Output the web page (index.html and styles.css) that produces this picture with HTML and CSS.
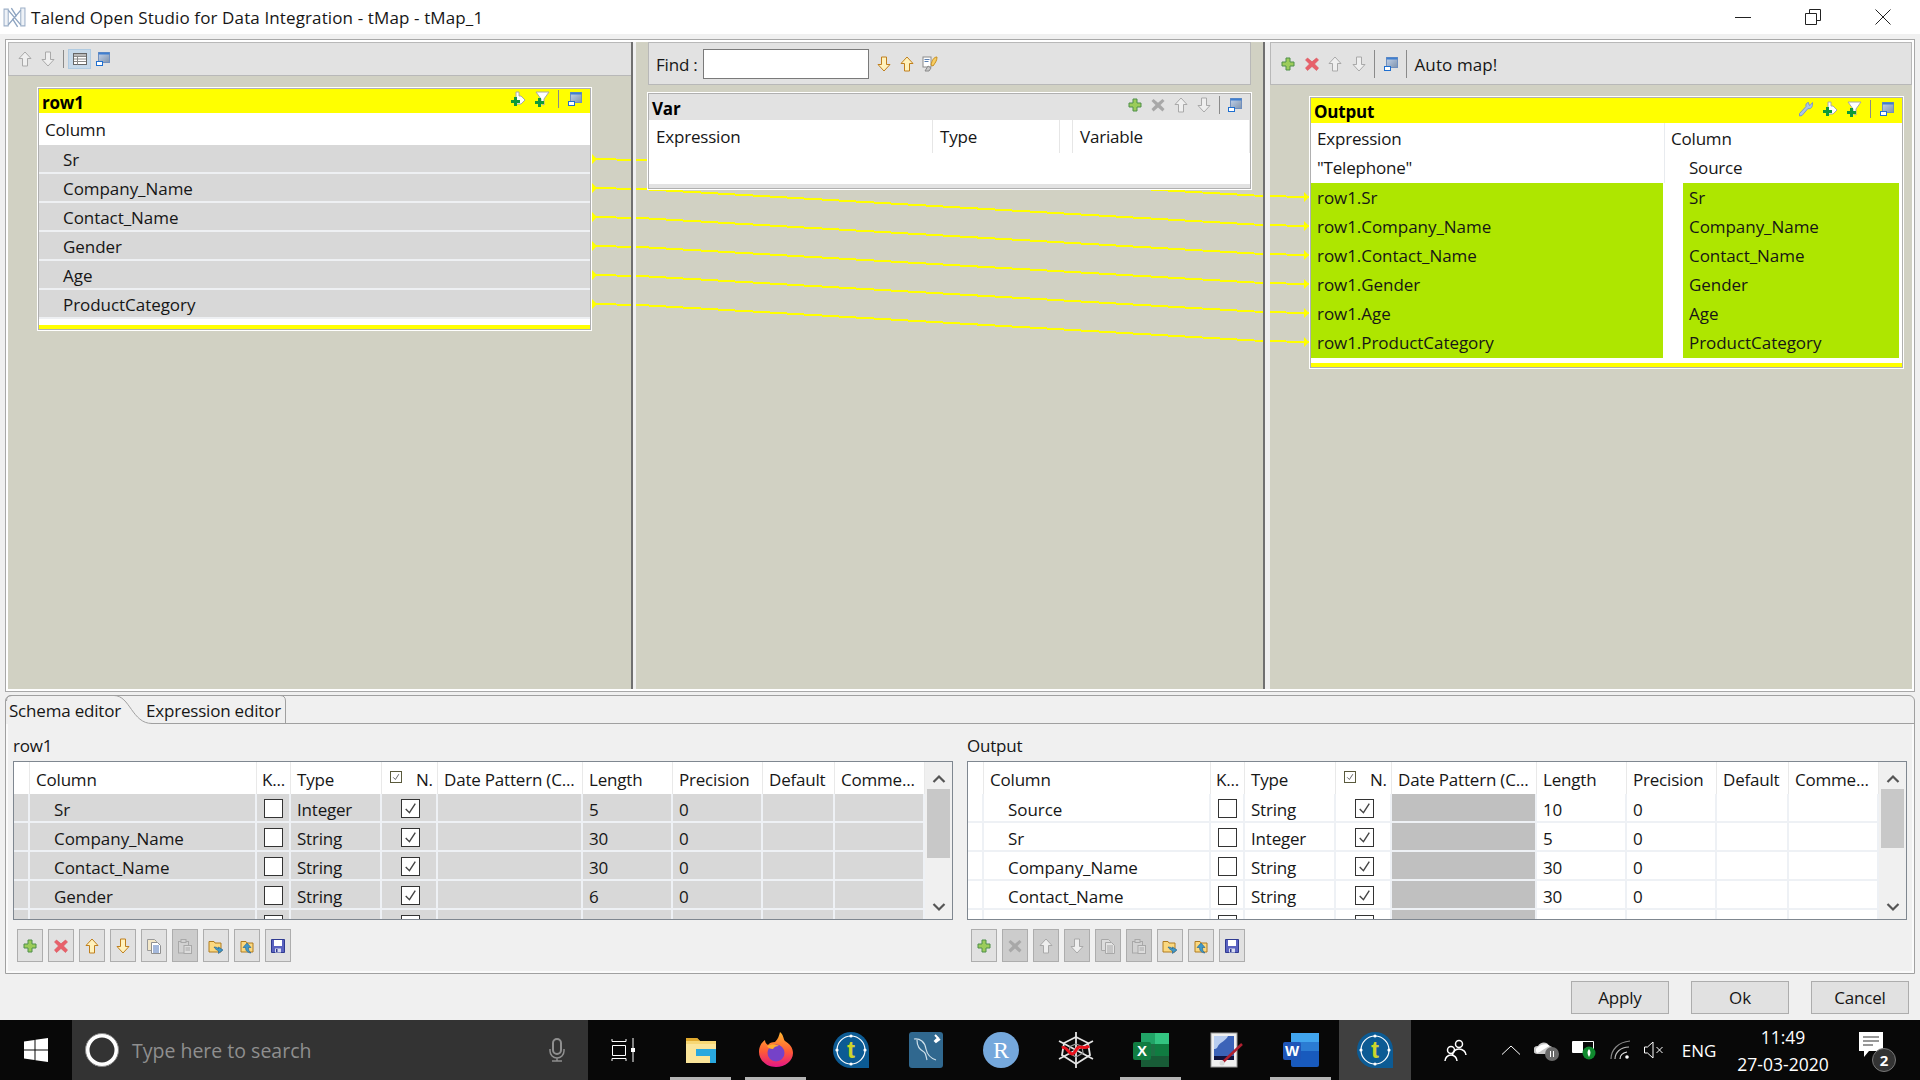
FILE: index.html
```html
<!DOCTYPE html>
<html lang="en">
<head>
  <meta charset="UTF-8">
  <title>Talend Open Studio for Data Integration - tMap - tMap_1</title>
  <link rel="stylesheet" href="styles.css">
</head>
<body>
  <!-- icon sprite -->
  <svg class="sprite" xmlns="http://www.w3.org/2000/svg">
    <defs>
      <linearGradient id="winFill" x1="0" y1="0" x2="1" y2="1"><stop offset="0" stop-color="#c4d4ec"/><stop offset="1" stop-color="#7f93ad"/></linearGradient>
    </defs>
    <symbol id="i-plus" viewBox="0 0 16 16"><path d="M6 2h4v4h4v4h-4v4H6v-4H2V6h4z" fill="#9ccc5a" stroke="#4f8f4a"/></symbol>
    <symbol id="i-x" viewBox="0 0 16 16"><path d="M3.500 2 8 5.800 12.500 2 14.500 4 10.500 8 14.500 12 12.500 14.500 8 10.500 3.500 14.500 1.500 12 5.500 8 1.500 4z" fill="#e8606a" stroke="#d85058" stroke-width=".6"/></symbol>
    <symbol id="i-x-off" viewBox="0 0 16 16"><path d="M3.500 2 8 5.800 12.500 2 14.500 4 10.500 8 14.500 12 12.500 14.500 8 10.500 3.500 14.500 1.500 12 5.500 8 1.500 4z" fill="#a8a8a8"/></symbol>
    <symbol id="i-up" viewBox="0 0 16 16"><path d="M8 1 14 7.500H10.500V15H5.500V7.500H2z" fill="#fff2bc" stroke="#c07f1c"/></symbol>
    <symbol id="i-down" viewBox="0 0 16 16"><path d="M8 15 14 8.500H10.500V1H5.500V8.500H2z" fill="#fff2bc" stroke="#c07f1c"/></symbol>
    <symbol id="i-up-off" viewBox="0 0 16 16"><path d="M8 1 14 7.500H10.500V15H5.500V7.500H2z" fill="#efefef" stroke="#a9a9a9"/></symbol>
    <symbol id="i-down-off" viewBox="0 0 16 16"><path d="M8 15 14 8.500H10.500V1H5.500V8.500H2z" fill="#efefef" stroke="#a9a9a9"/></symbol>
    <symbol id="i-win" viewBox="0 0 16 16"><rect x="3.500" y="1.500" width="11" height="10" fill="url(#winFill)" stroke="#6f8fbf"/><rect x="3.500" y="1.500" width="11" height="2" fill="#3f7fd0"/><rect x="1.500" y="10.500" width="6" height="4" fill="#fff" stroke="#1f6fd0"/></symbol>
    <symbol id="i-table" viewBox="0 0 16 16"><rect x="1.500" y="2.500" width="13" height="11" fill="#fff" stroke="#666"/><path d="M2 5.500h12M2 8h12M2 10.500h12M5.500 5.500v8" stroke="#8a8a8a" fill="none"/><rect x="2" y="3" width="12" height="2" fill="#b8b8b8"/></symbol>
    <symbol id="i-add" viewBox="0 0 16 16"><path d="M6 1h3v4h2l4 4-4 4H6z" fill="#fff" stroke="#a8a8a8"/><path d="M4 6h3v3h3v3H7v3H4v-3H1V9h3z" fill="#0f9a3a"/></symbol>
    <symbol id="i-filter" viewBox="0 0 16 16"><path d="M2 1h13l-5 7v6l-3-1.500V8z" fill="#fff" stroke="#a8a8a8"/><path d="M4 7h3v3h3v3H7v3H4v-3H1v-3h3z" fill="#0f9a3a"/></symbol>
    <symbol id="i-wrench" viewBox="0 0 16 16"><path d="M14.500 1.500 12 4.500 11 4 10.500 1.500C8.500 1.500 7.500 3.500 8 5.500L1.500 12.500 1.500 15 4 14.500 10 7.500C12.500 8.300 15 6.500 14.500 1.500z" fill="#a9c3e8" stroke="#7c98c6"/></symbol>
    <symbol id="i-find" viewBox="0 0 16 16"><rect x="1" y="1" width="8" height="10" fill="#fff" stroke="#8a8a8a"/><path d="M2.500 3.500h5M2.500 5.500h4" stroke="#5a7fb0"/><path d="M3 15l3-5 3 2-2 3z" fill="#c9c9c9" stroke="#8a8a8a"/><path d="M15 1c-3 0-5 3-6 8l2 1c2-3 4-5 4-9z" fill="#f7cd63" stroke="#c89020"/></symbol>
    <symbol id="i-copy" viewBox="0 0 16 16"><path d="M1.500 1.500h7l2 2v9h-9z" fill="#f4e8c8" stroke="#9a9a9a"/><path d="M5.500 4.500h6l3 3v8h-9z" fill="#fff" stroke="#8f8f8f"/><path d="M7 8h6M7 10h6M7 12h6M7 14h6" stroke="#4a72b8"/></symbol>
    <symbol id="i-copy-off" viewBox="0 0 16 16"><path d="M1.500 1.500h7l2 2v9h-9z" fill="#ddd" stroke="#a8a8a8"/><path d="M5.500 4.500h6l3 3v8h-9z" fill="#e4e4e4" stroke="#a8a8a8"/><path d="M7 8h6M7 10h6M7 12h6M7 14h6" stroke="#a8a8a8"/></symbol>
    <symbol id="i-paste-off" viewBox="0 0 16 16"><rect x="1.500" y="3.500" width="10" height="11.500" fill="#d2d2d2" stroke="#a8a8a8"/><rect x="4" y="1.500" width="5" height="3" fill="#d2d2d2" stroke="#a8a8a8"/><rect x="7" y="7.500" width="7.500" height="8" fill="#dcdcdc" stroke="#a8a8a8"/><path d="M8.500 10h4.500M8.500 12h4.500" stroke="#a8a8a8"/></symbol>
    <symbol id="i-import" viewBox="0 0 16 16"><path d="M1 3.500h5l1 1.500h6v9H1z" fill="#fbd87f" stroke="#b07c20"/><path d="M6 9c3 0 4 1 4.500 2V9l4.500 3-4.500 3.500V13C9 12 7 11 6 9z" fill="#3f98c8" stroke="#1f5f90" stroke-width=".6"/></symbol>
    <symbol id="i-export" viewBox="0 0 16 16"><path d="M2 3.500h5l1 1.500h6v9H2z" fill="#fbd87f" stroke="#b07c20"/><path d="M8 5 4 9.500h2.500c0 3 1.500 5 5.500 5.500-2-1.500-2.500-3-2.500-5.500H12z" fill="#3f98c8" stroke="#1f5f90" stroke-width=".6"/></symbol>
    <symbol id="i-save" viewBox="0 0 16 16"><path d="M1.500 1.500h13v13h-13z" fill="#5a62c0" stroke="#2f3a90"/><rect x="4" y="2" width="8" height="6" fill="#fff"/><rect x="5" y="10.500" width="6" height="4" fill="#d8dcf0"/><rect x="6" y="11" width="1.500" height="3" fill="#2f3a90"/></symbol>
    <symbol id="i-check" viewBox="0 0 16 16"><path d="M3.500 8.500 7 12 12.500 3.500" fill="none" stroke="#444" stroke-width="1.300"/></symbol>
  </svg>

  <header class="titlebar">
    <svg class="app-icon" viewBox="0 0 22 22"><path d="M1 3h4v16H1zM17 2h4v17h-4z" fill="#eef2f7" stroke="#9db0c8"/><path d="M5 4l12 14M17 4 5 18M8 2l5 8M14 20 9 12" fill="none" stroke="#8ea4c0" stroke-width="1.300"/></svg>
    <span class="app-title">Talend Open Studio for Data Integration - tMap - tMap_1</span>
    <div class="win-controls">
      <span class="win-btn"><svg width="16" height="16" viewBox="0 0 16 16"><path d="M0 8.500h16" stroke="#222"/></svg></span>
      <span class="win-btn"><svg width="16" height="16" viewBox="0 0 16 16"><path d="M.5 4.500h11v11H.5zM4.500 4V.5h11v11H12" fill="none" stroke="#222"/></svg></span>
      <span class="win-btn"><svg width="16" height="16" viewBox="0 0 16 16"><path d="M.5.500l15 15M15.500.500l-15 15" stroke="#222" fill="none"/></svg></span>
    </div>
  </header>

  <section class="mapper">
    <!-- links between input and output -->
    <svg class="links" viewBox="6 40 1908 651">
      <g fill="none" stroke="#ffff00" stroke-width="2" shape-rendering="crispEdges">
        <polyline points="592,159 640,160 1263,196 1309,197"/>
        <polyline points="592,188 640,189 1263,225 1309,226"/>
        <polyline points="592,217 640,218 1263,254 1309,255"/>
        <polyline points="592,246 640,247 1263,283 1309,284"/>
        <polyline points="592,275 640,276 1263,312 1309,313"/>
        <polyline points="592,304 640,305 1263,341 1309,342"/>
      </g>
      <g fill="#ffff00">
        <path d="M592 154v10l5-5zM592 183v10l5-5zM592 212v10l5-5zM592 241v10l5-5zM592 270v10l5-5zM592 299v10l5-5z"/>
        <path d="M1304 192v10l5-5zM1304 221v10l5-5zM1304 250v10l5-5zM1304 279v10l5-5zM1304 308v10l5-5zM1304 337v10l5-5z"/>
      </g>
    </svg>

    <div class="pane pane-in">
      <div class="toolbar toolbar-in">
        <svg class="ico"><use href="#i-up-off"/></svg>
        <svg class="ico"><use href="#i-down-off"/></svg>
        <span class="sep"></span>
        <span class="toggle"><svg class="ico"><use href="#i-table"/></svg></span>
        <svg class="ico"><use href="#i-win"/></svg>
      </div>
      <div class="map-table map-row1">
        <div class="map-head yellow">
          <b>row1</b>
          <span class="head-tools">
            <svg class="ico"><use href="#i-add"/></svg>
            <svg class="ico"><use href="#i-filter"/></svg>
            <span class="sep"></span>
            <svg class="ico"><use href="#i-win"/></svg>
          </span>
        </div>
        <div class="col-head">Column</div>
        <div class="in-row">Sr</div>
        <div class="in-row">Company_Name</div>
        <div class="in-row">Contact_Name</div>
        <div class="in-row">Gender</div>
        <div class="in-row">Age</div>
        <div class="in-row">ProductCategory</div>
        <div class="map-foot"></div>
      </div>
    </div>

    <div class="sash"></div>

    <div class="pane pane-var">
      <div class="toolbar toolbar-find">
        <span class="find-label">Find :</span>
        <input class="find-input" type="text">
        <svg class="ico"><use href="#i-down"/></svg>
        <svg class="ico"><use href="#i-up"/></svg>
        <svg class="ico"><use href="#i-find"/></svg>
      </div>
      <div class="map-table map-var">
        <div class="map-head grey">
          <b>Var</b>
          <span class="head-tools">
            <svg class="ico"><use href="#i-plus"/></svg>
            <svg class="ico"><use href="#i-x-off"/></svg>
            <svg class="ico"><use href="#i-up-off"/></svg>
            <svg class="ico"><use href="#i-down-off"/></svg>
            <span class="sep"></span>
            <svg class="ico"><use href="#i-win"/></svg>
          </span>
        </div>
        <div class="var-cols">
          <span>Expression</span>
          <span>Type</span>
          <span></span>
          <span>Variable</span>
        </div>
        <div class="var-body"></div>
        <div class="var-foot"></div>
      </div>
    </div>

    <div class="sash sash-right"></div>

    <div class="pane pane-out">
      <div class="toolbar toolbar-out">
        <svg class="ico"><use href="#i-plus"/></svg>
        <svg class="ico"><use href="#i-x"/></svg>
        <svg class="ico"><use href="#i-up-off"/></svg>
        <svg class="ico"><use href="#i-down-off"/></svg>
        <span class="sep tall"></span>
        <svg class="ico"><use href="#i-win"/></svg>
        <span class="sep tall"></span>
        <span class="auto-map">Auto map!</span>
      </div>
      <div class="map-table map-output">
        <div class="map-head yellow">
          <b>Output</b>
          <span class="head-tools">
            <svg class="ico"><use href="#i-wrench"/></svg>
            <svg class="ico"><use href="#i-add"/></svg>
            <svg class="ico"><use href="#i-filter"/></svg>
            <span class="sep"></span>
            <svg class="ico"><use href="#i-win"/></svg>
          </span>
        </div>
        <div class="out-row out-head"><span>Expression</span><span>Column</span></div>
        <div class="out-row out-plain"><span>"Telephone"</span><span class="indent">Source</span></div>
        <div class="out-row out-mapped"><span>row1.Sr</span><span class="indent">Sr</span></div>
        <div class="out-row out-mapped"><span>row1.Company_Name</span><span class="indent">Company_Name</span></div>
        <div class="out-row out-mapped"><span>row1.Contact_Name</span><span class="indent">Contact_Name</span></div>
        <div class="out-row out-mapped"><span>row1.Gender</span><span class="indent">Gender</span></div>
        <div class="out-row out-mapped"><span>row1.Age</span><span class="indent">Age</span></div>
        <div class="out-row out-mapped"><span>row1.ProductCategory</span><span class="indent">ProductCategory</span></div>
        <div class="map-foot"></div>
      </div>
    </div>
  </section>

  <section class="folder">
    <div class="tab-strip">
      <span class="tab tab-schema">Schema editor</span>
      <span class="tab tab-expr">Expression editor</span>
      <svg class="tab-lines" viewBox="0 0 300 29"><path d="M108 .5C124 .5 126 28.500 146 28.500M274 .5Q279.500 .5 279.500 6V28.500M.5 6Q.5 .5 6 .5" fill="none" stroke="#a0a0a0"/></svg>
    </div>
    <div class="schema">
      <div class="schema-side">
        <div class="schema-label">row1</div>
        <div class="grid-wrap">
          <table class="grid grid-in">
            <colgroup><col class="c0"><col class="c1"><col class="c2"><col class="c3"><col class="c4"><col class="c5"><col class="c6"><col class="c7"><col class="c8"><col class="c9"></colgroup>
            <thead><tr><th></th><th>Column</th><th class="tight">K...</th><th>Type</th><th class="nullable"><span class="mini-check"><svg class="ico-fill"><use href="#i-check"/></svg></span>N.</th><th>Date Pattern (C...</th><th>Length</th><th>Precision</th><th>Default</th><th>Comme...</th></tr></thead>
            <tbody>
              <tr><td></td><td class="name">Sr</td><td class="box"><span class="check"></span></td><td>Integer</td><td class="box"><span class="check"><svg class="ico-fill"><use href="#i-check"/></svg></span></td><td></td><td>5</td><td>0</td><td></td><td></td></tr>
              <tr><td></td><td class="name">Company_Name</td><td class="box"><span class="check"></span></td><td>String</td><td class="box"><span class="check"><svg class="ico-fill"><use href="#i-check"/></svg></span></td><td></td><td>30</td><td>0</td><td></td><td></td></tr>
              <tr><td></td><td class="name">Contact_Name</td><td class="box"><span class="check"></span></td><td>String</td><td class="box"><span class="check"><svg class="ico-fill"><use href="#i-check"/></svg></span></td><td></td><td>30</td><td>0</td><td></td><td></td></tr>
              <tr><td></td><td class="name">Gender</td><td class="box"><span class="check"></span></td><td>String</td><td class="box"><span class="check"><svg class="ico-fill"><use href="#i-check"/></svg></span></td><td></td><td>6</td><td>0</td><td></td><td></td></tr>
              <tr><td></td><td></td><td class="box"><span class="check"></span></td><td></td><td class="box"><span class="check"></span></td><td></td><td></td><td></td><td></td><td></td></tr>
            </tbody>
          </table>
          <div class="scroll">
            <svg class="scroll-arrow" viewBox="0 0 14 10"><path d="M1.500 8 7 2.500 12.500 8" fill="none" stroke="#555" stroke-width="2.200"/></svg>
            <div class="scroll-track"><div class="thumb thumb-in"></div></div>
            <svg class="scroll-arrow" viewBox="0 0 14 10"><path d="M1.500 2 7 7.500 12.500 2" fill="none" stroke="#555" stroke-width="2.200"/></svg>
          </div>
        </div>
        <div class="tool-row">
          <span class="tool-btn"><svg class="ico"><use href="#i-plus"/></svg></span>
          <span class="tool-btn"><svg class="ico"><use href="#i-x"/></svg></span>
          <span class="tool-btn"><svg class="ico"><use href="#i-up"/></svg></span>
          <span class="tool-btn"><svg class="ico"><use href="#i-down"/></svg></span>
          <span class="tool-btn"><svg class="ico"><use href="#i-copy"/></svg></span>
          <span class="tool-btn off"><svg class="ico"><use href="#i-paste-off"/></svg></span>
          <span class="tool-btn"><svg class="ico"><use href="#i-import"/></svg></span>
          <span class="tool-btn"><svg class="ico"><use href="#i-export"/></svg></span>
          <span class="tool-btn"><svg class="ico"><use href="#i-save"/></svg></span>
        </div>
      </div>

      <div class="schema-side">
        <div class="schema-label">Output</div>
        <div class="grid-wrap">
          <table class="grid grid-out">
            <colgroup><col class="c0"><col class="c1"><col class="c2"><col class="c3"><col class="c4"><col class="c5"><col class="c6"><col class="c7"><col class="c8"><col class="c9"></colgroup>
            <thead><tr><th></th><th>Column</th><th class="tight">K...</th><th>Type</th><th class="nullable"><span class="mini-check"><svg class="ico-fill"><use href="#i-check"/></svg></span>N.</th><th>Date Pattern (C...</th><th>Length</th><th>Precision</th><th>Default</th><th>Comme...</th></tr></thead>
            <tbody>
              <tr><td></td><td class="name">Source</td><td class="box"><span class="check"></span></td><td>String</td><td class="box"><span class="check"><svg class="ico-fill"><use href="#i-check"/></svg></span></td><td class="locked"></td><td>10</td><td>0</td><td></td><td></td></tr>
              <tr><td></td><td class="name">Sr</td><td class="box"><span class="check"></span></td><td>Integer</td><td class="box"><span class="check"><svg class="ico-fill"><use href="#i-check"/></svg></span></td><td class="locked"></td><td>5</td><td>0</td><td></td><td></td></tr>
              <tr><td></td><td class="name">Company_Name</td><td class="box"><span class="check"></span></td><td>String</td><td class="box"><span class="check"><svg class="ico-fill"><use href="#i-check"/></svg></span></td><td class="locked"></td><td>30</td><td>0</td><td></td><td></td></tr>
              <tr><td></td><td class="name">Contact_Name</td><td class="box"><span class="check"></span></td><td>String</td><td class="box"><span class="check"><svg class="ico-fill"><use href="#i-check"/></svg></span></td><td class="locked"></td><td>30</td><td>0</td><td></td><td></td></tr>
              <tr><td></td><td></td><td class="box"><span class="check"></span></td><td></td><td class="box"><span class="check"></span></td><td class="locked"></td><td></td><td></td><td></td><td></td></tr>
            </tbody>
          </table>
          <div class="scroll">
            <svg class="scroll-arrow" viewBox="0 0 14 10"><path d="M1.500 8 7 2.500 12.500 8" fill="none" stroke="#555" stroke-width="2.200"/></svg>
            <div class="scroll-track"><div class="thumb thumb-out"></div></div>
            <svg class="scroll-arrow" viewBox="0 0 14 10"><path d="M1.500 2 7 7.500 12.500 2" fill="none" stroke="#555" stroke-width="2.200"/></svg>
          </div>
        </div>
        <div class="tool-row">
          <span class="tool-btn"><svg class="ico"><use href="#i-plus"/></svg></span>
          <span class="tool-btn off"><svg class="ico"><use href="#i-x-off"/></svg></span>
          <span class="tool-btn off"><svg class="ico"><use href="#i-up-off"/></svg></span>
          <span class="tool-btn off"><svg class="ico"><use href="#i-down-off"/></svg></span>
          <span class="tool-btn off"><svg class="ico"><use href="#i-copy-off"/></svg></span>
          <span class="tool-btn off"><svg class="ico"><use href="#i-paste-off"/></svg></span>
          <span class="tool-btn"><svg class="ico"><use href="#i-import"/></svg></span>
          <span class="tool-btn"><svg class="ico"><use href="#i-export"/></svg></span>
          <span class="tool-btn"><svg class="ico"><use href="#i-save"/></svg></span>
        </div>
      </div>
    </div>
  </section>

  <footer class="dialog-buttons">
    <button>Apply</button>
    <button>Ok</button>
    <button>Cancel</button>
  </footer>

  <nav class="taskbar">
    <div class="start">
      <svg width="24" height="24" viewBox="0 0 24 24"><path d="M0 3.500 10.500 2v9.500H0zM11.500 1.800 24 0v11.500H11.500zM0 12.500h10.500V22L0 20.500zM11.500 12.500H24V24l-12.500-1.800z" fill="#fff"/></svg>
    </div>
    <div class="search">
      <svg class="cortana" width="36" height="36" viewBox="0 0 36 36"><circle cx="18" cy="18" r="14.500" fill="none" stroke="#fff" stroke-width="4"/><circle cx="18" cy="18" r="16.500" fill="none" stroke="#888"/></svg>
      <span class="search-text">Type here to search</span>
      <svg class="mic" width="18" height="24" viewBox="0 0 18 24"><rect x="5" y="1" width="8" height="15" rx="4" fill="none" stroke="#8f8f8f" stroke-width="2"/><path d="M2 11v2a7 7 0 0 0 14 0v-2M9 20v3M4 23h10" fill="none" stroke="#8f8f8f" stroke-width="1.500"/></svg>
    </div>
    <div class="taskview">
      <svg width="24" height="24" viewBox="0 0 24 24"><path d="M1 3.500h14M1 3.500V1M15 3.500V1M1.500 7.500h13v10h-13zM1 23v-2.500h14V23M22 0v24" fill="none" stroke="#fff"/><rect x="20" y="10" width="4" height="4" fill="#fff"/></svg>
    </div>
    <div class="apps">
      <div class="app running">
        <svg width="32" height="32" viewBox="0 0 32 32"><path d="M1 4h11l3 3h16v22H1z" fill="#f7d774"/><path d="M1 4h11l3 3H1z" fill="#e0a92e"/><path d="M1 10h30v19H1z" fill="#fbe59a"/><path d="M11 15h20v14h-6v-7H11z" fill="#29a8df"/></svg>
      </div>
      <div class="app running">
        <svg width="34" height="36" viewBox="0 0 34 36"><defs><linearGradient id="fx" x1="0" y1="0" x2="0" y2="1"><stop offset="0" stop-color="#ffb52e"/><stop offset=".55" stop-color="#ff5c35"/><stop offset="1" stop-color="#e31587"/></linearGradient></defs><path d="M17 35C7 35 0 28 0 20 0 14 3 10 6 8c0 2 1 4 3 5 1-2 4-3 7-3 3-3 4-6 5-10 4 3 3 7 5 9 5 3 8 7 8 12 0 8-8 14-17 14z" fill="url(#fx)"/><circle cx="17" cy="21" r="8.500" fill="#7542c8"/><path d="M8 14c4-2 9-2 12 0-3 0-5 1-6 3-3 0-5-1-6-3z" fill="#ffae2e"/></svg>
      </div>
      <div class="app">
        <svg width="36" height="36" viewBox="0 0 36 36"><path d="M18 0a18 18 0 1 0 0 36h18V18A18 18 0 0 0 18 0z" fill="#0c5b94"/><circle cx="18" cy="18" r="14" fill="#0c5b94" stroke="#fff" stroke-width="1.200"/><circle cx="18" cy="4" r="1.600" fill="#fff"/><circle cx="18" cy="32" r="1.600" fill="#fff"/><circle cx="4" cy="18" r="1.600" fill="#fff"/><circle cx="32" cy="18" r="1.600" fill="#fff"/><text x="18" y="26" class="logo-t">t</text></svg>
      </div>
      <div class="app">
        <svg width="34" height="36" viewBox="0 0 34 36"><rect width="34" height="36" rx="3" fill="#30688f"/><path d="M5 7c6-1 11 3 12 10 1 5 4 9 10 11M8 8c0 6 3 10 7 12 2 1 2 5 3 8" fill="none" stroke="#cfe0ea" stroke-width="1.200"/><path d="M26 3l3 3-3 3 1 1 4-3" fill="none" stroke="#fff" stroke-width="2"/></svg>
      </div>
      <div class="app">
        <svg width="36" height="36" viewBox="0 0 36 36"><ellipse cx="18" cy="18" rx="18" ry="18" fill="#75a8dc"/><text x="18" y="26" class="logo-r">R</text></svg>
      </div>
      <div class="app">
        <svg width="36" height="36" viewBox="0 0 36 36"><g fill="none" stroke="#e4e4e4" stroke-width="1.800"><path d="M18 0v36M1 9l34 18M35 9 1 27"/><path d="M18 5 30 11 32 23 18 32 4 23 6 11z"/></g><g fill="none" stroke="#9a9a9a" stroke-width="1.200"><path d="M18 12 24 14.500 25 21 18 25 11 21 12 14.500z"/></g><path d="M4 16c4-3 6 5 10 6 4 0 4-8 8-7 3 0 5 2 9-1" fill="none" stroke="#e8121c" stroke-width="3"/></svg>
      </div>
      <div class="app running">
        <svg width="36" height="36" viewBox="0 0 36 36"><rect x="8" y="1" width="28" height="34" rx="2" fill="#1e7145"/><rect x="22" y="1" width="14" height="11" fill="#33c481"/><rect x="22" y="12" width="14" height="12" fill="#107c41"/><rect x="8" y="1" width="14" height="11" fill="#21a366"/><rect x="8" y="24" width="28" height="11" fill="#185c37"/><rect y="10" width="18" height="18" rx="2" fill="#107c41"/><text x="9" y="24" class="logo-x">X</text></svg>
      </div>
      <div class="app">
        <svg width="34" height="36" viewBox="0 0 34 36"><rect x="2" y="1" width="26" height="34" fill="#f0f0f0" stroke="#999"/><rect x="5" y="4" width="20" height="24" fill="#3c63b8"/><path d="M5 4h14c-2 5-8 6-10 10-1 3-3 3-4 3z" fill="#b8cdf0"/><path d="M5 24h20v4H5z" fill="#10133e"/><path d="M33 12 14 30" stroke="#b02030" stroke-width="2.500"/><circle cx="13" cy="31" r="2.500" fill="#d8d8d8"/></svg>
      </div>
      <div class="app running">
        <svg width="36" height="36" viewBox="0 0 36 36"><rect x="8" y="1" width="28" height="34" rx="2" fill="#185abd"/><rect x="8" y="1" width="28" height="9" fill="#41a5ee"/><rect x="8" y="10" width="28" height="9" fill="#2b7cd3"/><rect y="10" width="18" height="18" rx="2" fill="#1e55b8"/><text x="9" y="24" class="logo-x">W</text></svg>
      </div>
      <div class="app active">
        <svg width="36" height="36" viewBox="0 0 36 36"><path d="M18 0a18 18 0 1 0 0 36h18V18A18 18 0 0 0 18 0z" fill="#0c5b94"/><circle cx="18" cy="18" r="14" fill="#0c5b94" stroke="#fff" stroke-width="1.200"/><circle cx="18" cy="4" r="1.600" fill="#fff"/><circle cx="18" cy="32" r="1.600" fill="#fff"/><circle cx="4" cy="18" r="1.600" fill="#fff"/><circle cx="32" cy="18" r="1.600" fill="#fff"/><text x="18" y="26" class="logo-t">t</text></svg>
      </div>
    </div>
    <div class="tray">
      <svg class="t-people" width="24" height="24" viewBox="0 0 24 24"><g fill="none" stroke="#fff" stroke-width="1.500"><circle cx="15" cy="6" r="3.500"/><path d="M8.500 17c0-3 2.500-6 6.500-6s7 3 7 6"/><circle cx="7" cy="12" r="3.500"/><path d="M1 23c0-3 2.500-6 6-6s6 3 6 6"/></g></svg>
      <svg class="t-chev" width="18" height="10" viewBox="0 0 18 10"><path d="M0 9.500 9 1 18 9.500" fill="none" stroke="#fff"/></svg>
      <svg class="t-cloud" width="26" height="22" viewBox="0 0 26 22"><path d="M3 15a4 4 0 0 1 1-8c2-4 9-5 11 0 4 0 5 3 4 8z" fill="#c8c8c8"/><path d="M3 14c4-1 9-6 13-7-3-3-9-2-12 1-2 1-3 3-1 6z" fill="#fff"/><circle cx="18" cy="15" r="7" fill="#6a6a6a"/><path d="M16.500 12v6M19.500 12v6" stroke="#fff"/></svg>
      <svg class="t-batt" width="24" height="20" viewBox="0 0 24 20"><path d="M.5 1.500h21v11H.5z" fill="none" stroke="#fff"/><rect x="1" y="2" width="10" height="10" fill="#fff"/><circle cx="17" cy="13" r="6.500" fill="#0f8a2e"/><path d="M17 9c-2 2-2 5 0 8 2-3 2-6 0-8z" fill="#fff"/></svg>
      <svg class="t-wifi" width="22" height="20" viewBox="0 0 22 20"><g fill="none" stroke="#8a8a8a" stroke-width="1.200"><path d="M1 19C1 10 8 2 20 1"/><path d="M5 19c0-6 5-12 14-12" stroke="#bdbdbd"/><path d="M10 19c0-3 2-6 7-7" stroke="#e0e0e0"/></g><circle cx="17" cy="17" r="1.800" fill="#fff"/></svg>
      <svg class="t-sound" width="20" height="18" viewBox="0 0 20 18"><path d="M.5 6h3L9 1v16L3.500 12H.5z" fill="none" stroke="#fff"/><path d="M12.500 6l6 6M18.500 6l-6 6" stroke="#fff"/></svg>
      <span class="t-lang">ENG</span>
      <div class="t-clock"><span>11:49</span><span>27-03-2020</span></div>
      <div class="t-notif">
        <svg width="36" height="36" viewBox="0 0 36 36"><path d="M4 0h24v19H14l-5 6v-6H4z" fill="#fff"/><path d="M8 5h16M8 9h16M8 13h10" stroke="#333" stroke-width="1.200"/></svg>
        <span class="t-badge">2</span>
      </div>
    </div>
  </nav>
</body>
</html>
```

FILE: styles.css
```css
/* page */
* {
  box-sizing: border-box;
}

body {
  margin: 0;
  width: 1920px;
  height: 1080px;
  overflow: hidden;
  display: flex;
  flex-direction: column;
  background: #f0f0f0;
  color: #161616;
  font-family: "Open Sans", "Noto Sans", sans-serif;
  font-size: 17px;
  letter-spacing: -0.2px;
}

.sprite {
  width: 0;
  height: 0;
  position: absolute;
}

.ico {
  width: 16px;
  height: 16px;
  flex: none;
}

.ico-fill {
  width: 100%;
  height: 100%;
  display: block;
}

/* title bar */
.titlebar {
  height: 34px;
  flex: none;
  background: #fff;
  display: flex;
  align-items: center;
  padding-left: 3px;
}

.app-icon {
  width: 23px;
  height: 23px;
  margin-right: 5px;
}

.app-title {
  letter-spacing: 0.12px;
}

.win-controls {
  margin-left: auto;
  margin-right: 2px;
  display: flex;
}

.win-btn {
  width: 70px;
  display: flex;
  justify-content: center;
}

/* mapper area */
.mapper {
  position: relative;
  flex: none;
  height: 653px;
  margin: 5px 5px 0;
  padding: 2px 2px 2px;
  border: 1px solid #a8a8a8;
  background: #fff;
  display: flex;
}

.links {
  position: absolute;
  left: 0;
  top: 0;
  width: 1908px;
  height: 651px;
  z-index: 1;
}

.pane {
  background: #d1d1c3;
}

.pane-in {
  width: 623px;
}

.pane-var {
  width: 627px;
  padding: 0 12px;
}

.pane-out {
  width: 642px;
}

.sash {
  width: 5px;
  flex: none;
  background: #f0f0f0;
  border-left: 2px solid #707070;
  position: relative;
  z-index: 2;
}

.sash-right {
  width: 7px;
}

.toolbar {
  background: #e2e2e2;
  border: 1px solid #b8b8b8;
  display: flex;
  align-items: center;
  position: relative;
  z-index: 2;
}

.toolbar-in {
  height: 34px;
  padding-left: 8px;
  gap: 7px;
  border-width: 1px 0 1px 1px;
}

.toggle {
  width: 23px;
  height: 20px;
  background: #c6d9ea;
  border: 1px solid #b0cbe2;
  display: flex;
  align-items: center;
  justify-content: center;
  margin-left: -3px;
  margin-right: -3px;
}

.sep {
  width: 1px;
  height: 18px;
  background: #8a8a8a;
  flex: none;
}

.sep.tall {
  height: 28px;
}

.toolbar-find {
  height: 43px;
  padding-left: 7px;
  gap: 7px;
}

.find-label {
  margin-right: -2px;
  padding-top: 1px;
}

.find-input {
  width: 166px;
  height: 30px;
  border: 1px solid #7a7a7a;
  background: #fff;
  margin-right: 0;
  padding: 0;
}

.toolbar-out {
  height: 43px;
  padding-left: 9px;
  gap: 7.5px;
}

.auto-map {
  padding-top: 2px;
  letter-spacing: 0.1px;
}

/* map tables */
.map-table {
  position: relative;
  z-index: 2;
  background: #fff;
  border: 1px solid #b0b0b0;
  outline: 1px solid #fff;
  outline-offset: 0;
}

.map-row1 {
  width: 553px;
  margin: 12px 0 0 30px;
}

.map-var {
  margin-top: 8px;
  height: 96px;
}

.map-output {
  width: 593px;
  margin: 12px 0 0 40px;
}

.map-head {
  height: 25px;
  display: flex;
  align-items: center;
  justify-content: space-between;
  padding: 2px 7px 0 3px;
  color: #000;
}

.map-row1 .map-head {
  height: 24px;
}

.map-var .map-head {
  height: 26px;
}

.map-head b {
  font-weight: 700;
}

.yellow {
  background: #ffff00;
}

.grey {
  background: #e2e2e2;
}

.head-tools {
  display: flex;
  align-items: center;
  gap: 7px;
  margin-top: -6px;
}

.yellow .head-tools {
  gap: 8px;
}

.col-head {
  height: 32px;
  line-height: 33px;
  padding-left: 6px;
}

.in-row {
  height: 29px;
  line-height: 30px;
  padding-left: 24px;
  background: #d8d8d8;
  border-bottom: 2px solid #eef0f3;
  letter-spacing: -0.05px;
}

.map-foot {
  height: 10px;
  border-top: 6px solid #fff;
  background: #ffff00;
}

.var-cols {
  display: grid;
  grid-template-columns: 284px 127px 13px 1fr;
  height: 31px;
  line-height: 33px;
}

.var-cols span {
  padding-left: 7px;
  border-right: 1px solid #e6e6e6;
}

.var-body {
  height: 33px;
}

.var-foot {
  height: 4px;
  background: #e2e2e2;
}

.out-row {
  display: grid;
  grid-template-columns: 354px 1fr;
  height: 29px;
  line-height: 30px;
}

.out-row span {
  padding-left: 6px;
}

.out-head {
  height: 30px;
  line-height: 31px;
}

.out-plain {
  height: 30px;
}

.out-head span:first-child,
.out-plain span:first-child {
  border-right: 1px solid #e8ebef;
}

.out-mapped span {
  background: #aee600;
  border-bottom: 2px solid #fff;
  letter-spacing: -0.05px;
}

.out-mapped span:first-child {
  margin-right: 2px;
  padding-left: 6px;
}

.out-mapped .indent {
  margin: 0 3px 0 18px;
  padding-left: 6px;
}

.out-plain .indent {
  padding-left: 24px;
}

/* tab folder */
.folder {
  flex: none;
  height: 279px;
  margin: 3px 5px 0;
  border: 1px solid #a0a0a0;
  border-top-right-radius: 6px;
  border-top-left-radius: 6px;
  background: #f0f0f0;
}

.tab-strip {
  position: relative;
  height: 28px;
  display: flex;
  align-items: center;
}

.tab-strip::after {
  content: "";
  position: absolute;
  left: 145px;
  right: 0;
  bottom: 0;
  height: 1px;
  background: #a0a0a0;
}

.tab-schema {
  width: 140px;
  padding-left: 3px;
}

.tab-lines {
  position: absolute;
  left: 0;
  top: -1px;
  width: 300px;
  height: 29px;
}

.schema {
  display: flex;
  gap: 14px;
  padding: 9px 0 0 5px;
  border: 2px solid #fafafa;
  border-top: 0;
  height: 249px;
}

.schema-side {
  width: 940px;
  flex: none;
}

.schema-label {
  height: 24px;
  line-height: 25px;
  margin-bottom: 4px;
}

.grid-wrap {
  height: 159px;
  border: 1px solid #7f8790;
  background: #fff;
  display: flex;
  overflow: hidden;
}

.grid {
  width: 911px;
  flex: none;
  table-layout: fixed;
  border-collapse: separate;
  border-spacing: 0;
}

.grid .c0 { width: 16px; }
.grid .c1 { width: 227px; }
.grid .c2 { width: 34px; }
.grid .c3 { width: 91px; }
.grid .c4 { width: 56px; }
.grid .c5 { width: 145px; }
.grid .c6 { width: 90px; }
.grid .c7 { width: 90px; }
.grid .c8 { width: 72px; }
.grid .c9 { width: 90px; }

.grid th {
  height: 32px;
  padding: 2px 0 0 6px;
  font-weight: 400;
  text-align: left;
  white-space: nowrap;
  overflow: hidden;
  background: #fff;
  border-right: 1px solid #e9e9e9;
}

.grid th.tight {
  padding-left: 5px;
}

.grid th.nullable {
  padding-left: 8px;
}

.grid td {
  height: 29px;
  padding: 3px 0 0 6px;
  border-right: 2px solid #eef1f5;
  border-bottom: 2px solid #eef1f5;
  white-space: nowrap;
  overflow: hidden;
}

.grid td.name {
  padding-left: 24px;
  letter-spacing: -0.05px;
}

.grid td.box {
  padding: 0;
  text-align: center;
  line-height: 0;
}

/* nullable column sits a pixel to the right */
.grid td.box:nth-child(5) {
  padding-left: 2px;
}

.grid-in td {
  background: #d8d8d8;
}

.grid-out td {
  background: #fff;
}

.grid-out td.locked {
  background: #c0c0c0;
}

.check {
  display: inline-block;
  width: 19px;
  height: 19px;
  margin-bottom: -1px;
  background: #fff;
  border: 1px solid #333;
}

.mini-check {
  display: inline-block;
  width: 12px;
  height: 12px;
  margin-right: 14px;
  vertical-align: 3px;
  background: #fff;
  border: 1px solid #5a5a3c;
}

.scroll {
  width: 27px;
  flex: none;
  background: #f0f0f0;
  display: flex;
  flex-direction: column;
  align-items: center;
  padding: 12px 0 7px;
}

.scroll-arrow {
  width: 14px;
  height: 10px;
  flex: none;
}

.scroll-track {
  width: 100%;
  flex: 1;
  padding: 5px 2px 0;
}

.thumb {
  background: #c8c8c8;
}

.thumb-in {
  height: 69px;
}

.thumb-out {
  height: 59px;
}

.tool-row {
  display: flex;
  gap: 5px;
  margin: 9px 0 0 4px;
}

.tool-btn {
  width: 26px;
  height: 33px;
  background: #e1e1e1;
  border: 1px solid #adadad;
  display: flex;
  align-items: center;
  justify-content: center;
}

.tool-btn.off {
  background: #cccccc;
}

/* dialog buttons */
.dialog-buttons {
  flex: none;
  height: 46px;
  display: flex;
  justify-content: flex-end;
  gap: 22px;
  padding: 7px 11px 6px 0;
}

.dialog-buttons button {
  width: 98px;
  height: 33px;
  background: #e1e1e1;
  border: 1px solid #adadad;
  color: #161616;
  font: inherit;
  letter-spacing: inherit;
  padding: 0;
}

/* taskbar */
.taskbar {
  flex: none;
  height: 60px;
  display: flex;
  align-items: center;
  background: #080808;
  color: #fff;
  position: relative;
}

.start {
  width: 72px;
  height: 60px;
  display: flex;
  align-items: center;
  justify-content: center;
}

.search {
  width: 516px;
  height: 60px;
  background: #333;
  display: flex;
  align-items: center;
  padding-left: 12px;
}

.search-text {
  margin-left: 12px;
  color: #8f8f8f;
  font-size: 19.500px;
  letter-spacing: 0;
}

.mic {
  margin-left: auto;
  margin-right: 22px;
}

.taskview {
  width: 70px;
  display: flex;
  justify-content: center;
}

.apps {
  margin-left: 12px;
  display: flex;
  gap: 14px;
}

.app {
  width: 61px;
  height: 60px;
  display: flex;
  align-items: center;
  justify-content: center;
  position: relative;
}

.app.running::after {
  content: "";
  position: absolute;
  left: 0;
  right: 0;
  bottom: 0;
  height: 3px;
  background: #b4b4b4;
}

.app.active {
  width: 72px;
  margin-left: -6px;
  background: #404040;
}

.logo-t {
  font: 700 24px "Liberation Sans", sans-serif;
  fill: #cdd42a;
  text-anchor: middle;
}

.logo-r {
  font: 400 24px "Liberation Serif", serif;
  fill: #fff;
  text-anchor: middle;
}

.logo-x {
  font: 700 15px "Liberation Sans", sans-serif;
  fill: #fff;
  text-anchor: middle;
}

.tray {
  display: flex;
  align-items: center;
  height: 60px;
}

.t-people { margin-left: 33px; }
.t-chev { margin-left: 34px; }
.t-cloud { margin-left: 14px; }
.t-batt { margin-left: 12px; }
.t-wifi { margin-left: 14px; }
.t-sound { margin-left: 12px; }

.t-lang {
  width: 40px;
  margin-left: 15px;
  text-align: center;
  letter-spacing: 0;
}

.t-clock {
  width: 100px;
  margin-left: 14px;
  display: flex;
  flex-direction: column;
  align-items: center;
  gap: 3px;
  line-height: 24px;
  font-size: 17.500px;
  letter-spacing: 0;
}

.t-notif {
  position: relative;
  width: 36px;
  height: 36px;
  margin-left: 22px;
}

.t-badge {
  position: absolute;
  right: -5px;
  bottom: -4px;
  width: 24px;
  height: 24px;
  border-radius: 50%;
  background: #333;
  border: 1px solid #777;
  text-align: center;
  font-size: 15px;
  font-weight: 700;
  line-height: 22px;
}
```
